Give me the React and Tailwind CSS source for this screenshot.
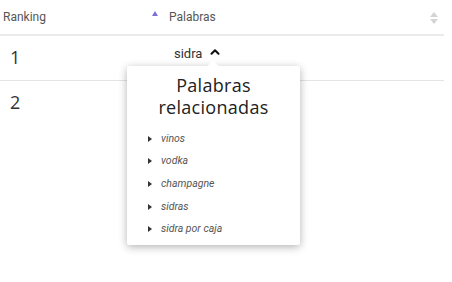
import { ChevronUp } from 'lucide-react';

const related = ['vinos', 'vodka', 'champagne', 'sidras', 'sidra por caja'];

const SortIcon = () => (
  <svg width="8" height="12" viewBox="0 0 8 12" className="text-[#d4d4d4]">
    <path d="M4 0 L8 5 L0 5 Z" fill="currentColor" />
    <path d="M4 12 L8 7 L0 7 Z" fill="currentColor" />
  </svg>
);

export default function App() {
  return (
    <div className="relative w-[452px] h-[282px] bg-white overflow-hidden font-['Roboto',sans-serif]">
      <div className="w-[444px]">
        <div className="flex items-center h-[36px] border-b-2 border-[#ebebeb] text-[12px] text-[#555]">
          <div className="w-[148px] pl-[3px]">Ranking</div>
          <div className="flex-1 flex items-center">
            <svg width="6" height="5" viewBox="0 0 6 5" className="mt-[-8px] ml-[4px]">
              <path d="M3 0 L6 5 L0 5 Z" fill="#7a70d6" />
            </svg>
            <span className="ml-[11px]">Palabras</span>
          </div>
          <div className="pr-[6px] pt-[2px]">
            <SortIcon />
          </div>
        </div>
        <div className="flex h-[45px] border-b border-[#e4e4e4]">
          <div className="w-[148px] pl-[10px] pt-[8px] text-[18px] text-[#333] font-['Open_Sans',sans-serif]">1</div>
          <div className="flex items-start pl-[26px] pt-[8px] text-[13px] text-[#333]">
            <span>sidra</span>
            <ChevronUp size={14} strokeWidth={3.5} className="ml-[6px] mt-[1px] text-[#111]" />
          </div>
        </div>
        <div className="flex h-[44px]">
          <div className="w-[148px] pl-[10px] pt-[8px] text-[18px] text-[#333] font-['Open_Sans',sans-serif]">2</div>
        </div>
      </div>

      <div className="absolute left-[127px] top-[66px] w-[173px] h-[179px] bg-white rounded-[2px] shadow-[0_2px_8px_rgba(0,0,0,0.3)]">
        <div className="absolute left-[82px] top-[-4px] w-[8px] h-[8px] bg-white rotate-45" />
        <div className="relative pt-[8px] text-center text-[18px] leading-[22px] tracking-[0.3px] text-[#222] font-['Open_Sans',sans-serif]">
          Palabras
          <br />
          relacionadas
        </div>
        <ul className="mt-[12px] flex flex-col gap-[5.7px] pl-[21px]">
          {related.map(w => (
            <li key={w} className="flex items-center h-[17px] text-[10.5px] italic text-[#555]">
              <svg width="4" height="6" viewBox="0 0 4 6" className="mr-[9px]">
                <path d="M0 0 L4 3 L0 6 Z" fill="#333" />
              </svg>
              {w}
            </li>
          ))}
        </ul>
      </div>
    </div>
  );
}
